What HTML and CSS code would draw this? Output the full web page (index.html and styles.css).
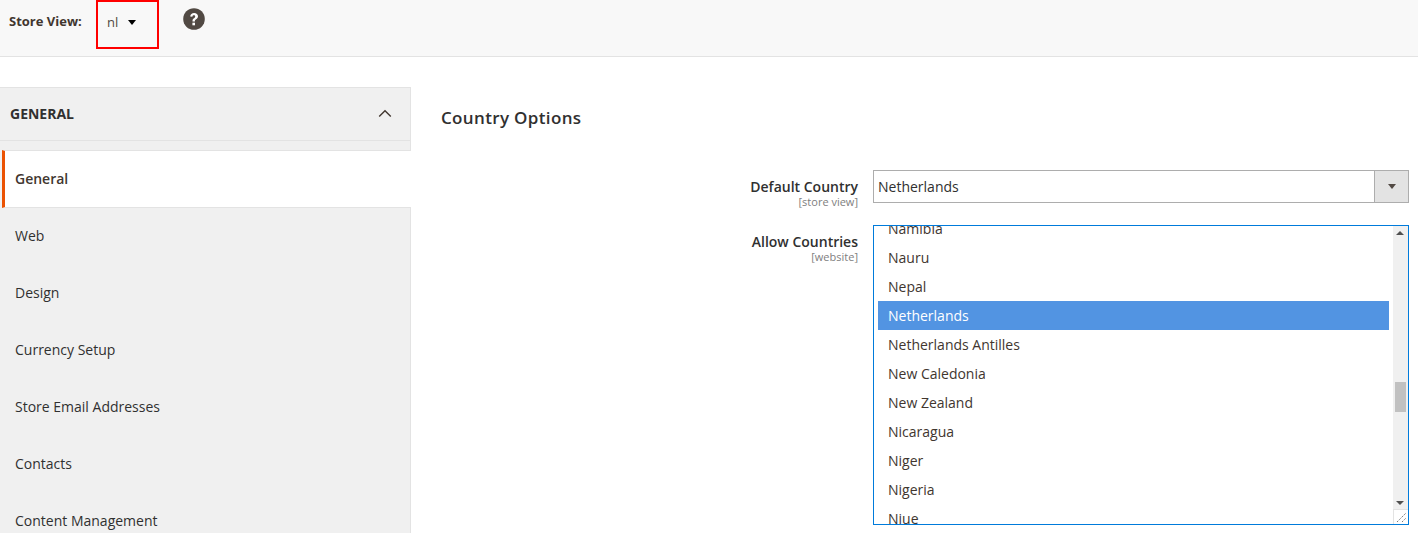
FILE: index.html
```html
<!DOCTYPE html>
<html lang="en">
<head>
<meta charset="utf-8">
<title>Store configuration</title>
<link rel="stylesheet" href="styles.css">
</head>
<body>
<header class="scope">
  <span class="scope-label">Store View:</span>
  <div class="scope-switch"><span class="scope-value">nl</span><span class="caret"></span></div>
  <svg class="help" width="22" height="22" viewBox="0 0 22 22"><circle cx="11" cy="11" r="10.8" fill="#514943"/><path d="M7.2 8.4C7.4 6.2 8.9 4.9 11.1 4.9c2.3 0 3.9 1.4 3.9 3.3 0 1.4-.8 2.3-1.9 3-.9.6-1.2 1-1.2 1.9v.4H9.5v-.6c0-1.3.5-2 1.5-2.7.8-.6 1.2-1 1.2-1.7 0-.7-.5-1.2-1.3-1.2-.9 0-1.4.5-1.5 1.4z" fill="#fff"/><rect x="9.4" y="14.7" width="2.6" height="2.6" fill="#fff"/></svg>
</header>
<div class="page">
  <aside class="side">
    <div class="side-head"><span>GENERAL</span><svg class="chev" width="14" height="9" viewBox="0 0 14 9"><path d="M1.2 7.6 7 1.8l5.8 5.8" fill="none" stroke="#41362f" stroke-width="1.4"/></svg></div>
    <ul class="side-list">
      <li class="side-item active">General</li>
      <li class="side-item">Web</li>
      <li class="side-item">Design</li>
      <li class="side-item">Currency Setup</li>
      <li class="side-item">Store Email Addresses</li>
      <li class="side-item">Contacts</li>
      <li class="side-item">Content Management</li>
    </ul>
  </aside>
  <main class="main">
    <h2 class="section-title">Country Options</h2>
    <div class="row row-default">
      <div class="label"><strong>Default Country</strong><small>[store view]</small></div>
      <div class="select"><span class="select-text">Netherlands</span><span class="select-btn"><span class="select-arrow"></span></span></div>
    </div>
    <div class="row">
      <div class="label"><strong>Allow Countries</strong><small>[website]</small></div>
      <div class="multi">
        <ul class="options">
          <li class="opt">Namibia</li>
          <li class="opt">Nauru</li>
          <li class="opt">Nepal</li>
          <li class="opt selected">Netherlands</li>
          <li class="opt">Netherlands Antilles</li>
          <li class="opt">New Caledonia</li>
          <li class="opt">New Zealand</li>
          <li class="opt">Nicaragua</li>
          <li class="opt">Niger</li>
          <li class="opt">Nigeria</li>
          <li class="opt">Niue</li>
        </ul>
        <div class="scrollbar">
          <span class="sb-up"></span>
          <span class="sb-thumb"></span>
          <span class="sb-down"></span>
          <span class="sb-corner"><svg width="14" height="14" viewBox="0 0 14 14"><path d="M3 12 12 3M8 12l4-4" stroke="#777" stroke-width="1" stroke-dasharray="1.4 1" fill="none"/></svg></span>
        </div>
      </div>
    </div>
  </main>
</div>
</body>
</html>
```
FILE: styles.css
```css
* { box-sizing: border-box; }
html, body { margin: 0; padding: 0; }
body {
  height: 533px;
  overflow: hidden;
  background: #fff;
  color: #303030;
  font-family: "Open Sans", sans-serif;
  font-size: 14px;
}
ul { list-style: none; margin: 0; padding: 0; }

.scope {
  height: 57px;
  background: #f8f8f8;
  border-bottom: 1px solid #e3e3e3;
  display: flex;
  align-items: flex-start;
  padding-left: 9px;
}
.scope-label { font-size: 13px; font-weight: 700; color: #41362f; line-height: 18px; margin-top: 12px; width: 87px; }
.scope-switch {
  width: 63px;
  height: 49px;
  border: 2px solid #f00;
  padding: 11px 0 0 9px;
  display: flex;
  align-items: flex-start;
}
.scope-value { font-size: 13px; line-height: 18px; color: #514943; }
.caret {
  margin: 7px 0 0 10px;
  border-style: solid;
  border-width: 5px 4.5px 0;
  border-color: #000 transparent transparent;
}
.help { margin: 8px 0 0 24px; }

.page { display: flex; padding-top: 30px; }
.side { width: 411px; flex: none; background: #f0f0f0; height: 446px; border-right: 1px solid #e3e3e3; }
.side-head {
  height: 54px;
  border-top: 1px solid #e3e3e3;
  border-bottom: 1px solid #e3e3e3;
  display: flex;
  align-items: center;
  justify-content: space-between;
  padding: 0 18px 2px 10px;
  font-size: 14px;
  font-weight: 700;
  color: #303030;
}
.side-list { margin-top: 9px; }
.side-item {
  height: 57px;
  padding-left: 15px;
  line-height: 56px;
  font-size: 14px;
  color: #303030;
}
.side-item.active {
  height: 58px;
  line-height: 55px;
  background: #fff;
  margin-right: -1px;
  margin-left: 2px;
  padding-left: 10px;
  border-top: 1px solid #e3e3e3;
  border-bottom: 1px solid #e3e3e3;
  border-left: 3px solid #eb5202;
  font-weight: 600;
  color: #41362f;
}

.main { flex: 1; padding: 21px 9px 0 30px; min-width: 0; }
.section-title { margin: 0; font-size: 17px; line-height: 19px; font-weight: 600; letter-spacing: .35px; color: #303030; }
.row { display: flex; align-items: flex-start; }
.row-default { margin-top: 43px; height: 55px; }
.label { width: 417px; flex: none; text-align: right; padding-top: 8px; }
.label strong { display: block; font-size: 14px; line-height: 18px; font-weight: 600; color: #303030; }
.label small { display: block; font-size: 11px; line-height: 12px; color: #808080; margin-top: 0; }
.select {
  margin-left: 15px;
  flex: 1;
  height: 33px;
  border: 1px solid #adadad;
  display: flex;
  align-items: stretch;
  font-size: 14px;
  color: #303030;
}
.select-text { flex: 1; padding-left: 4px; line-height: 31px; }
.select-btn {
  width: 34px;
  background: #e3e3e3;
  border-left: 1px solid #adadad;
  display: flex;
  align-items: center;
  justify-content: center;
}
.select-arrow {
  border-style: solid;
  border-width: 5px 4px 0;
  border-color: #514943 transparent transparent;
  width: 0;
}
.multi {
  margin-left: 15px;
  flex: 1;
  height: 300px;
  border: 1px solid #007bdb;
  display: flex;
  overflow: hidden;
  position: relative;
}
.options { flex: 1; padding: 0 4px; margin-top: -12px; font-size: 14px; color: #41362f; }
.opt { height: 29px; line-height: 29px; padding-left: 10px; }
.opt.selected { background: #5294e2; color: #fff; }
.scrollbar { width: 15px; background: #f0f0f0; position: relative; flex: none; }
.sb-up, .sb-down { position: absolute; left: 3px; width: 0; border-style: solid; }
.sb-up { top: 5px; border-width: 0 4px 4px; border-color: transparent transparent #505050; }
.sb-down { bottom: 19px; border-width: 4px 4px 0; border-color: #505050 transparent transparent; }
.sb-thumb { position: absolute; left: 2px; top: 156px; width: 11px; height: 30px; background: #c1c1c1; }
.sb-corner { position: absolute; right: 0; bottom: 0; width: 15px; height: 15px; background: #fff; border: 1px solid #e3e3e3; border-width: 1px 0 0 1px; display: block; line-height: 0; }
```
